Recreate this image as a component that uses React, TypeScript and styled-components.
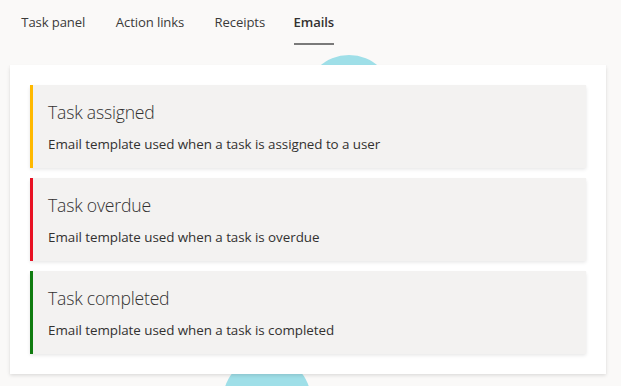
import styled, { createGlobalStyle } from 'styled-components';

interface EmailTemplate {
  id: string;
  title: string;
  description: string;
  accent: string;
}

const templates: EmailTemplate[] = [
  {
    id: 'assigned',
    title: 'Task assigned',
    description: 'Email template used when a task is assigned to a user',
    accent: '#ffb900',
  },
  {
    id: 'overdue',
    title: 'Task overdue',
    description: 'Email template used when a task is overdue',
    accent: '#e81123',
  },
  {
    id: 'completed',
    title: 'Task completed',
    description: 'Email template used when a task is completed',
    accent: '#107c10',
  },
];

const tabs = ['Task panel', 'Action links', 'Receipts', 'Emails'];

const GlobalStyle = createGlobalStyle`
  html, body {
    margin: 0;
    padding: 0;
    background: #faf9f8;
  }
  body {
    font-family: "Open Sans", "Noto Sans", "Liberation Sans", sans-serif;
    color: #323130;
  }
`;

const Page = styled.div`
  position: relative;
  width: 621px;
  height: 386px;
  overflow: hidden;
  background: #faf9f8;
`;

const Blob = styled.div<{ $x: number; $y: number }>`
  position: absolute;
  left: ${p => p.$x - 44}px;
  top: ${p => p.$y - 44}px;
  width: 88px;
  height: 88px;
  border-radius: 50%;
  background: #9fdfe8;
  z-index: 0;
`;

const TabBar = styled.nav`
  position: relative;
  z-index: 1;
  display: flex;
  padding: 0 0 0 12px;
  height: 45px;
`;

const Tab = styled.div<{ $active?: boolean }>`
  position: relative;
  display: inline-flex;
  flex-direction: column;
  align-items: center;
  padding: 0 8px;
  margin-right: 11.5px;
  line-height: 44px;
  font-size: 13.1px;
  letter-spacing: -0.1px;
  font-weight: ${p => (p.$active ? 600 : 400)};
  color: ${p => (p.$active ? '#323130' : '#3b3a39')};

  &::after {
    content: attr(data-title);
    font-weight: 600;
    height: 0;
    overflow: hidden;
    visibility: hidden;
  }

  ${p =>
    p.$active &&
    `
    &::before {
      content: '';
      position: absolute;
      left: 8px;
      right: 8px;
      bottom: 0;
      height: 2px;
      background: #7a7a7a;
    }
  `}
`;

const Panel = styled.section`
  position: relative;
  z-index: 1;
  margin: 20px 15px 0 10px;
  padding: 20px;
  background: #ffffff;
  box-shadow: 0 1.6px 3.6px rgba(0, 0, 0, 0.13), 0 0.3px 0.9px rgba(0, 0, 0, 0.11);
  display: flex;
  flex-direction: column;
  gap: 10px;
`;

const Card = styled.div<{ $accent: string }>`
  background: #f3f2f1;
  border-left: 3px solid ${p => p.$accent};
  padding: 13px 15px 0 15px;
  height: 83px;
  box-sizing: border-box;
  box-shadow: 0 1.6px 3.6px rgba(0, 0, 0, 0.1), 0 0.3px 0.9px rgba(0, 0, 0, 0.08);
`;

const CardTitle = styled.div`
  font-size: 17.6px;
  font-weight: 300;
  line-height: 28px;
  letter-spacing: -0.2px;
  color: #323130;
`;

const CardDescription = styled.div`
  margin-top: 9px;
  font-size: 13.4px;
  line-height: 18px;
  color: #323130;
  letter-spacing: -0.05px;
`;

export default function App() {
  return (
    <Page>
      <GlobalStyle />
      <Blob $x={349} $y={99} />
      <Blob $x={267} $y={400} />
      <TabBar>
        {tabs.map(t => (
          <Tab key={t} data-title={t} $active={t === 'Emails'}>
            {t}
          </Tab>
        ))}
      </TabBar>
      <Panel>
        {templates.map(tpl => (
          <Card key={tpl.id} $accent={tpl.accent}>
            <CardTitle>{tpl.title}</CardTitle>
            <CardDescription>{tpl.description}</CardDescription>
          </Card>
        ))}
      </Panel>
    </Page>
  );
}
